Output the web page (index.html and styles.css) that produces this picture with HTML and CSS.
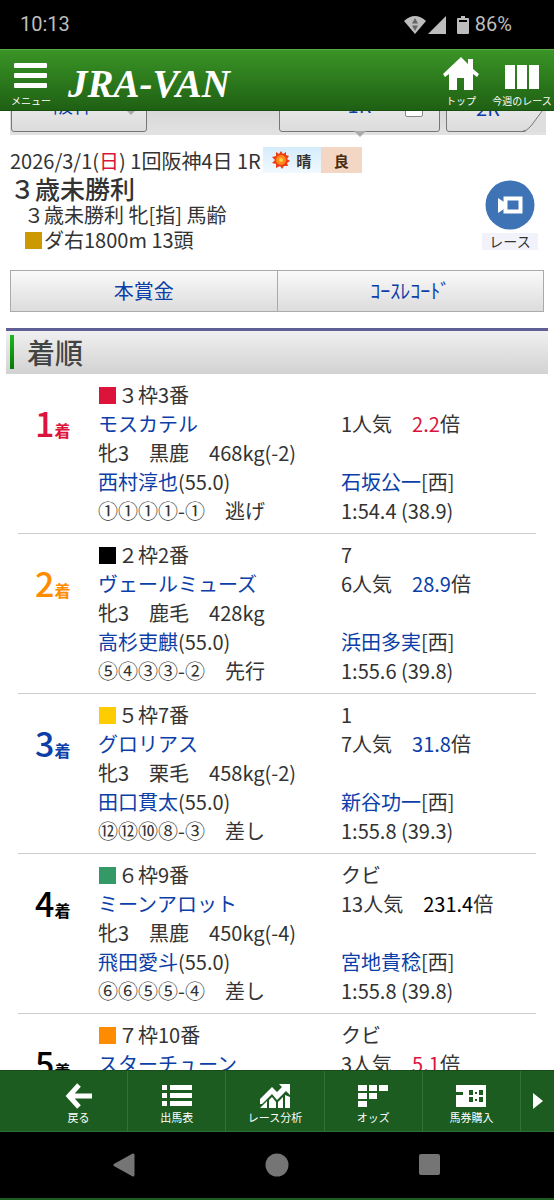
FILE: index.html
```html
<!DOCTYPE html>
<html lang="ja">
<head>
    <meta charset="UTF-8">
    <meta name="viewport" content="width=device-width, initial-scale=1.0">
    <title>JRA-VAN レース結果</title>
    <link rel="stylesheet" href="styles.css">
</head>
<body>

    <div class="status-bar">
        <span>10:13</span>
        <div class="status-icons">
            <svg width="22" height="20" viewBox="0 0 22 20">
                <path d="M0 6Q11 -4 22 6L11 19Z" fill="#bdbdbd"/>
                <path d="M11 3L14 8.500H8ZM8 10.500H14L11 16Z" fill="#666"/>
            </svg>
            <svg width="19" height="20" viewBox="0 0 19 20"><path d="M18 1V19H0Z" fill="#bdbdbd"/></svg>
            <svg class="battery" width="12" height="20" viewBox="0 0 12 20">
                <path d="M4 1H8V3H11Q12 3 12 4V18Q12 19 11 19H1Q0 19 0 18V4Q0 3 1 3H4Z" fill="#bdbdbd"/>
                <path d="M2 5H10V7H2Z" fill="#000"/>
            </svg>
            <span>86%</span>
        </div>
    </div>

    <header class="header">
        <button class="header-button menu">
            <svg width="34" height="28" viewBox="0 0 34 28" fill="#fff">
                <rect width="33" height="5" rx="1"/><rect y="10" width="33" height="5" rx="1"/><rect y="20" width="33" height="5" rx="1"/>
            </svg>
            メニュー
        </button>
        <a class="logo" href="#">JRA-VAN</a>
        <a class="header-button top" href="#">
            <svg width="38" height="35" viewBox="0 0 38 35" fill="#fff">
                <path d="M19 1L26 8V3H31V13L37 18L35 21L31 18V34H22V22H15V34H7V18L3 21L1 18Z"/>
            </svg>
            トップ
        </a>
        <a class="header-button week" href="#">
            <svg width="34" height="26" viewBox="0 0 34 26" fill="#fff">
                <rect width="10" height="24"/><rect x="12" width="10" height="24"/><rect x="24" width="10" height="24"/>
            </svg>
            今週のレース
        </a>
    </header>

    <main class="content">
        <nav class="race-tabs">
            <button class="tab place">阪神 <span class="caret"></span></button>
            <button class="tab current">1R <span class="copy"></span></button>
            <button class="tab next">2R
                <svg class="corner" width="24" height="26" viewBox="0 0 24 26">
                    <path d="M2 26Q6 25 9 20L24 0V26Z" fill="#dedede"/>
                    <path d="M0 25.500Q5 25 9 20L23 1" fill="none" stroke="#777"/>
                </svg>
            </button>
        </nav>

        <section class="race">
            <div class="race-date">
                <span>2026/3/1(<span class="red">日</span>) 1回阪神4日 1R</span>
                <span class="weather">
                    <svg width="18" height="18" viewBox="0 0 18 18">
                        <path d="M9 0L11 3L14 1V4L17 5L15 8L18 10L15 12L16 15L12 15L10 18L8 15L4 17L4 13L0 12L3 9L0 6L4 5L4 1L7 3Z" fill="#f03c14"/>
                        <circle cx="9" cy="9" r="5" fill="#ff8a1c"/><circle cx="9" cy="9" r="2" fill="#ffd24a"/>
                    </svg>
                    晴
                </span>
                <span class="going">良</span>
            </div>
            <div class="race-main">
                <div class="race-info">
                    <h1>３歳未勝利</h1>
                    <p>３歳未勝利 牝[指] 馬齢</p>
                    <p><span class="mark dirt"></span>ダ右1800m 13頭</p>
                </div>
                <a class="video" href="#">
                    <svg width="50" height="50" viewBox="0 0 50 50">
                        <circle cx="25" cy="25" r="24.500" fill="#3e73b5"/>
                        <path d="M13 18L19 22V29L13 33Z" fill="#fff"/>
                        <rect x="20.500" y="18.500" width="15" height="13" fill="none" stroke="#fff" stroke-width="4"/>
                    </svg>
                    <span>レース</span>
                </a>
            </div>
            <div class="links">
                <button>本賞金</button>
                <button>ｺｰｽﾚｺｰﾄﾞ</button>
            </div>
        </section>

        <h2>着順</h2>
        <table class="results">
            <tr>
                <td class="rank red"><b>1</b>着</td>
                <td class="horse">
                    <div><span class="mark waku3"></span>３枠3番</div>
                    <div><a href="#">モスカテル</a></div>
                    <div>牝3　黒鹿　468kg(-2)</div>
                    <div><a href="#">西村淳也</a>(55.0)</div>
                    <div>①①①①-①　逃げ</div>
                </td>
                <td class="time">
                    <div></div>
                    <div>1人気　<span class="red">2.2</span>倍</div>
                    <div></div>
                    <div><a href="#">石坂公一</a>[西]</div>
                    <div>1:54.4 (38.9)</div>
                </td>
            </tr>
            <tr>
                <td class="rank orange"><b>2</b>着</td>
                <td class="horse">
                    <div><span class="mark waku2"></span>２枠2番</div>
                    <div><a href="#">ヴェールミューズ</a></div>
                    <div>牝3　鹿毛　428kg</div>
                    <div><a href="#">高杉吏麒</a>(55.0)</div>
                    <div>⑤④③③-②　先行</div>
                </td>
                <td class="time">
                    <div>7</div>
                    <div>6人気　<span class="blue">28.9</span>倍</div>
                    <div></div>
                    <div><a href="#">浜田多実</a>[西]</div>
                    <div>1:55.6 (39.8)</div>
                </td>
            </tr>
            <tr>
                <td class="rank blue"><b>3</b>着</td>
                <td class="horse">
                    <div><span class="mark waku5"></span>５枠7番</div>
                    <div><a href="#">グロリアス</a></div>
                    <div>牝3　栗毛　458kg(-2)</div>
                    <div><a href="#">田口貫太</a>(55.0)</div>
                    <div>⑫⑫⑩⑧-③　差し</div>
                </td>
                <td class="time">
                    <div>1</div>
                    <div>7人気　<span class="blue">31.8</span>倍</div>
                    <div></div>
                    <div><a href="#">新谷功一</a>[西]</div>
                    <div>1:55.8 (39.3)</div>
                </td>
            </tr>
            <tr>
                <td class="rank black"><b>4</b>着</td>
                <td class="horse">
                    <div><span class="mark waku6"></span>６枠9番</div>
                    <div><a href="#">ミーンアロット</a></div>
                    <div>牝3　黒鹿　450kg(-4)</div>
                    <div><a href="#">飛田愛斗</a>(55.0)</div>
                    <div>⑥⑥⑤⑤-④　差し</div>
                </td>
                <td class="time">
                    <div>クビ</div>
                    <div>13人気　<span class="black">231.4</span>倍</div>
                    <div></div>
                    <div><a href="#">宮地貴稔</a>[西]</div>
                    <div>1:55.8 (39.8)</div>
                </td>
            </tr>
            <tr>
                <td class="rank black"><b>5</b>着</td>
                <td class="horse">
                    <div><span class="mark waku7"></span>７枠10番</div>
                    <div><a href="#">スターチューン</a></div>
                </td>
                <td class="time">
                    <div>クビ</div>
                    <div>3人気　<span class="red">5.1</span>倍</div>
                </td>
            </tr>
        </table>
    </main>

    <nav class="footer">
        <a href="#">
            <svg width="32" height="26" viewBox="0 0 32 26"><path d="M16 2L6 13L16 24M6 13H29" fill="none" stroke="#fff" stroke-width="5"/></svg>
            戻る
        </a>
        <a href="#">
            <svg width="32" height="26" viewBox="0 0 32 26" fill="#fff">
                <path d="M1 2H6V7H1ZM9 2H31V7H9ZM1 10H6V15H1ZM9 10H31V15H9ZM1 18H6V23H1ZM9 18H31V23H9Z"/>
            </svg>
            出馬表
        </a>
        <a href="#">
            <svg width="32" height="26" viewBox="0 0 32 26" fill="#fff">
                <path d="M1 16L13 4L18 9L23 4L20 1H31V12L27 8L18 17L13 11L3 21H1Z"/>
                <path d="M1 25L8 18V25ZM10 25V17L13 14L17 19V25ZM19 25V19L24 14V25ZM26 25V12L31 14V25Z"/>
            </svg>
            レース分析
        </a>
        <a href="#">
            <svg width="32" height="26" viewBox="0 0 32 26" fill="#fff">
                <path d="M1 2H10V8H1ZM12 2H20V8H12ZM22 2H31V8H22ZM1 10H10V16H1ZM12 10H20V16H12ZM1 18H10V24H1Z"/>
            </svg>
            オッズ
        </a>
        <a href="#">
            <svg width="32" height="26" viewBox="0 0 32 26">
                <path d="M1 2H31V24H1V12H8V9H1Z" fill="#fff"/>
                <path d="M14 7H18V12H14ZM24 7H28V12H24ZM14 14H18V19H14ZM24 14H28V19H24ZM20 9H22V11H20ZM20 16H22V18H20Z" fill="#1c5c20"/>
            </svg>
            馬券購入
        </a>
        <button class="more" aria-label="次へ">
            <svg width="10" height="16" viewBox="0 0 10 16"><path d="M0 0L10 8L0 16Z" fill="#fff"/></svg>
        </button>
    </nav>

    <div class="system-nav">
        <svg width="24" height="24" viewBox="0 0 24 24"><path d="M3 12L21 2V22Z" fill="#757575" stroke="#757575" stroke-width="3" stroke-linejoin="round"/></svg>
        <svg width="24" height="24" viewBox="0 0 24 24"><circle cx="12" cy="12" r="11.500" fill="#757575"/></svg>
        <svg width="24" height="24" viewBox="0 0 24 24"><rect x="1" y="1" width="21" height="21" rx="2" fill="#757575"/></svg>
    </div>

</body>
</html>
```
FILE: styles.css
```css
* {
    box-sizing: border-box;
}
body {
    margin: 0;
    height: 100vh;
    display: flex;
    flex-direction: column;
    background: #fff;
    color: #333;
    font-family: "Noto Sans CJK JP", sans-serif;
    font-size: 20px;
    line-height: 29px;
}
a {
    color: #0b3ea8;
    text-decoration: none;
}
button {
    font-family: inherit;
    cursor: pointer;
}
svg {
    display: block;
    flex-shrink: 0;
}
.red {
    color: #dc143c;
}
.orange {
    color: #ff8c00;
}
.blue {
    color: #0b3ea8;
}
.black {
    color: #000;
}

/* status bar */
.status-bar {
    flex: none;
    height: 49px;
    padding: 0 42px 0 20px;
    display: flex;
    justify-content: space-between;
    align-items: center;
    background: #000;
    color: #bdbdbd;
    font-family: Roboto, sans-serif;
}
.status-icons {
    display: flex;
    align-items: center;
    gap: 2px;
}
.battery {
    margin: 0 4px 0 8px;
}

/* header */
.header {
    flex: none;
    height: 62px;
    display: flex;
    align-items: flex-end;
    background: linear-gradient(#3a9426, #1f6014);
    border-top: 1px solid #58a846;
    border-bottom: 1px solid #17500e;
}
.header-button {
    padding: 0 0 2px;
    border: 0;
    background: none;
    display: flex;
    flex-direction: column;
    align-items: center;
    gap: 3px;
    color: #fff;
    font-size: 10px;
    line-height: 14px;
    white-space: nowrap;
}
.menu {
    width: 62px;
}
.logo {
    flex: 1;
    padding: 0 0 6px 6px;
    color: #fff;
    font-family: "Liberation Serif", serif;
    font-size: 39px;
    line-height: 40px;
    font-weight: bold;
    font-style: italic;
}
.top {
    width: 58px;
}
.week {
    width: 64px;
}

/* race number tabs, scrolled under the header */
.content {
    flex: 1;
    min-height: 0;
    overflow: hidden;
}
.race-tabs {
    margin: -29px 8px 0 10px;
    padding: 0 0 3px 1px;
    display: flex;
    background: linear-gradient(#ccc, #e2e2e2);
}
.tab {
    position: relative;
    height: 50px;
    padding: 0 0 5px;
    border: 1px solid #777;
    border-radius: 3px;
    background: linear-gradient(#f4f4f4, #dcdcdc);
    color: #0b3ea8;
    font-size: 20px;
}
.place {
    width: 136px;
    padding-right: 12px;
    margin-right: auto;
}
.current {
    width: 161px;
    margin-right: 6px;
}
.current::after {
    content: "";
    position: absolute;
    left: 50%;
    bottom: -6px;
    margin-left: -6px;
    border: 6px solid transparent;
    border-top-color: #aaa;
    border-bottom: 0;
}
.next {
    width: 100px;
    padding: 0 16px 0 0;
}
.corner {
    position: absolute;
    right: -1px;
    bottom: -1px;
}
.caret {
    position: absolute;
    right: 10px;
    bottom: 16px;
    border: 5px solid transparent;
    border-top-color: #aaa;
    border-bottom: 0;
}
.copy {
    position: absolute;
    right: 16px;
    bottom: 14px;
    width: 18px;
    height: 20px;
    border: 1px solid #888;
    border-radius: 2px;
    background: #fff;
}

/* race info */
.race {
    padding: 11px 10px 0;
}
.race-date {
    display: flex;
    align-items: center;
    height: 28px;
    white-space: nowrap;
}
.weather,
.going {
    display: flex;
    align-items: center;
    justify-content: center;
    height: 26px;
    font-size: 15px;
    font-weight: bold;
}
.weather {
    gap: 6px;
    width: 58px;
    margin-left: 2px;
    background: linear-gradient(#d4ecfb, #f1f9fe);
}
.going {
    width: 41px;
    background: #f3d6c4;
    color: #4a2c10;
}
.race-main {
    display: flex;
    justify-content: space-between;
}
h1 {
    margin: 0;
    font-size: 25px;
    line-height: 28px;
    font-weight: 500;
}
.race-info p {
    margin: 0 0 0 14px;
    line-height: 25px;
}
.mark {
    display: inline-block;
    width: 17px;
    height: 17px;
    margin: 0 2px 0 1px;
    vertical-align: -1px;
}
.dirt {
    background: #c90;
}
.video {
    margin-top: 6px;
    padding-right: 6px;
    display: flex;
    flex-direction: column;
    align-items: center;
    gap: 3px;
}
.video span {
    width: 56px;
    background: #f2f2fb;
    color: #333;
    font-size: 14px;
    line-height: 17px;
    text-align: center;
}
.links {
    display: flex;
    margin-top: 18px;
    border: 1px solid #aaa;
}
.links button {
    flex: 1;
    height: 40px;
    padding: 0 0 2px;
    border: 0;
    background: linear-gradient(#fafafa, #dcdcdc);
    color: #0b3ea8;
    font-size: 20px;
}
.links button + button {
    border-left: 1px solid #aaa;
}
h2 {
    display: flex;
    align-items: center;
    gap: 13px;
    margin: 16px 6px 0;
    padding: 0 0 2px 4px;
    height: 46px;
    border-top: 3px solid #5f5f96;
    background: linear-gradient(#f0f0f0, #d2d2d2);
    color: #444;
    font-size: 28px;
    line-height: 34px;
    font-weight: 500;
}
h2::before {
    content: "";
    width: 4px;
    height: 34px;
    background: linear-gradient(#1cb81c, #067a06);
}

/* results */
.results {
    width: calc(100% - 36px);
    margin: 0 18px;
    border-collapse: collapse;
    table-layout: fixed;
}
.results td {
    padding: 6px 0 8px;
    vertical-align: top;
    white-space: nowrap;
}
.results tr {
    border-bottom: 1px solid #ccc;
}
.results div {
    height: 29px;
}
.results .rank {
    width: 80px;
    padding: 26px 0 0 17px;
    font-size: 16px;
    line-height: 46px;
    font-weight: bold;
}
.rank b {
    font-size: 34px;
    font-weight: 500;
}
.time {
    width: 195px;
}
.waku2 {
    background: #000;
}
.waku3 {
    background: #dc143c;
}
.waku5 {
    background: #fc0;
}
.waku6 {
    background: #396;
}
.waku7 {
    background: #ff8c00;
}

/* bottom menu */
.footer {
    flex: none;
    height: 62px;
    padding-left: 30px;
    display: flex;
    background: #1c5c20;
    border-top: 1px solid #184c1a;
    border-bottom: 1px solid #2c7030;
}
.footer a {
    flex: 1;
    padding-top: 4px;
    display: flex;
    flex-direction: column;
    align-items: center;
    justify-content: center;
    border-right: 1px solid #2f7433;
    gap: 1px;
    color: #fff;
    font-size: 11px;
    line-height: 14px;
}
.more {
    width: 33px;
    padding: 0;
    border: 0;
    background: none;
    display: flex;
    align-items: center;
    justify-content: center;
}
.system-nav {
    flex: none;
    height: 68px;
    display: flex;
    align-items: center;
    justify-content: center;
    gap: 129px;
    background: #000;
    border-bottom: 2px solid #1c5c20;
}
```
